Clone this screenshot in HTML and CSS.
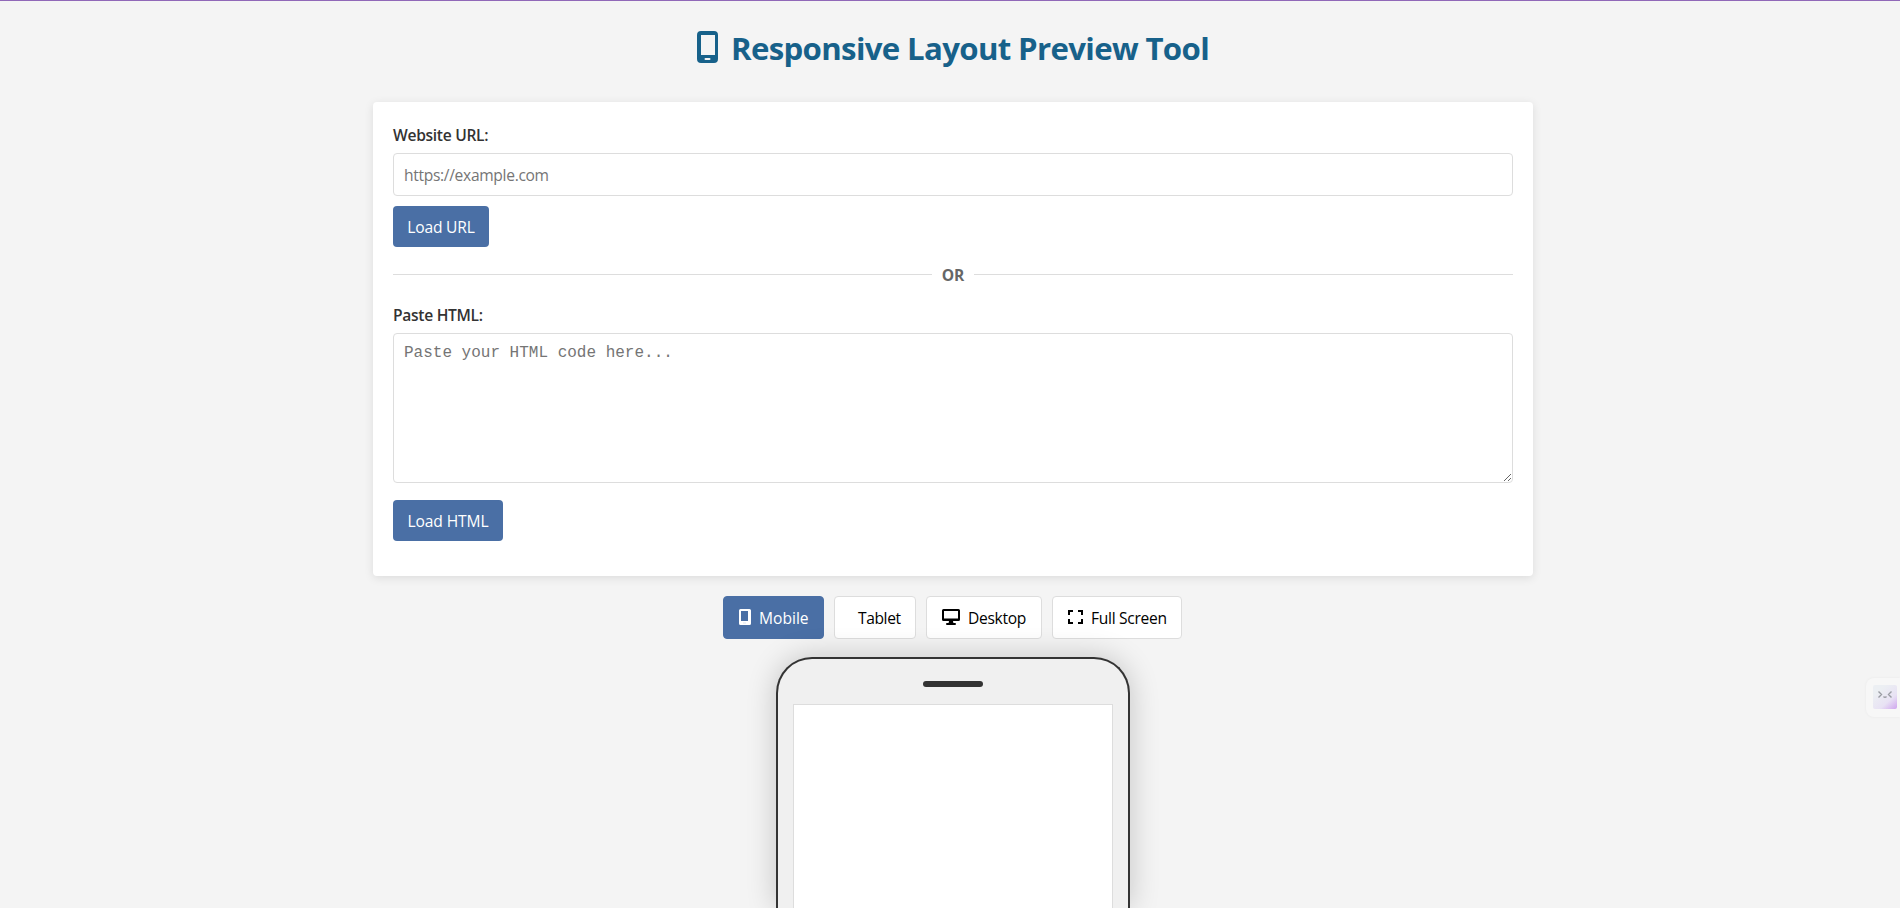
FILE: index.html
```html
<!DOCTYPE html>
<html lang="en">
<head>
<meta charset="utf-8">
<title>Responsive Layout Preview Tool</title>
<link rel="stylesheet" href="styles.css">
</head>
<body>
<div class="container">
  <h1 class="title">
    <svg class="title-icon" width="21" height="32" viewBox="0 0 21 32" fill="currentColor"><path fill-rule="evenodd" d="M4 0h13a4 4 0 0 1 4 4v24a4 4 0 0 1-4 4H4a4 4 0 0 1-4-4V4a4 4 0 0 1 4-4zM4 4v20h14V4zM8.500 27a1 1 0 0 0 0 2h4a1 1 0 0 0 0-2z"/></svg>
    <span>Responsive Layout Preview Tool</span>
  </h1>
  <section class="card">
    <div class="group">
      <label class="label" for="url">Website URL:</label>
      <input class="field" id="url" type="text" placeholder="https://example.com">
      <button class="load load-url">Load URL</button>
    </div>
    <div class="divider"><span class="or">OR</span></div>
    <div class="group">
      <label class="label label-html" for="html">Paste HTML:</label>
      <textarea class="code" id="html" placeholder="Paste your HTML code here..."></textarea>
      <button class="load load-html">Load HTML</button>
    </div>
  </section>
  <nav class="devices">
    <button class="device mobile active"><svg width="12" height="16" viewBox="0 0 12 16" fill="currentColor"><path fill-rule="evenodd" d="M1.500 0h9A1.500 1.500 0 0 1 12 1.500v13a1.500 1.500 0 0 1-1.500 1.500h-9A1.500 1.500 0 0 1 0 14.500v-13A1.500 1.500 0 0 1 1.500 0zM2 2v10h7V2z"/><path class="home" d="M4 13.500h3v1H4z"/></svg><span>Mobile</span></button>
    <button class="device tablet"><span>Tablet</span></button>
    <button class="device desktop"><svg width="18" height="16" viewBox="0 0 18 16" fill="currentColor"><path fill-rule="evenodd" d="M1.500 0h15A1.500 1.500 0 0 1 18 1.500v9a1.500 1.500 0 0 1-1.500 1.500H11l.4 2H13a1 1 0 0 1 0 2H5a1 1 0 0 1 0-2h1.600l.4-2H1.500A1.500 1.500 0 0 1 0 10.500v-9A1.500 1.500 0 0 1 1.500 0zM2 2v7.500h14V2z"/></svg><span>Desktop</span></button>
    <button class="device full"><svg width="15" height="16" viewBox="0 0 15 16" fill="none" stroke="currentColor" stroke-width="2"><path d="M1 6V2h4M10 2h4v4M1 10v4h4M10 14h4v-4"/></svg><span>Full Screen</span></button>
  </nav>
  <div class="phone">
    <div class="speaker"></div>
    <div class="screen"></div>
  </div>
</div>
<div class="helper"><svg width="24" height="24" viewBox="0 0 24 24"><defs><linearGradient id="g" x1="0.3" y1="0.2" x2="1" y2="1"><stop offset="0" stop-color="#eceff3"/><stop offset=".55" stop-color="#e8e2f4"/><stop offset="1" stop-color="#cfa5ee"/></linearGradient></defs><rect width="24" height="24" rx="2" fill="url(#g)"/><path d="M5.500 6.500 8.500 9.500l-3 3M18.500 6.500l-3 3 3 3M10.500 11.500q1.500 1.700 3 0" fill="none" stroke="#9a9ca3" stroke-width="1.400"/></svg></div>
</body>
</html>
```
FILE: styles.css
```css
* { box-sizing: border-box; }
html { overflow: hidden; }
body {
  margin: 0;
  height: 908px;
  overflow: hidden;
  position: relative;
  border-top: 1px solid #9068b8;
  background: #f4f4f4;
  color: #333;
  font: 15.6px/26px "Open Sans", "Noto Sans", sans-serif;
}
.container {
  display: flex;
  flex-direction: column;
  width: 1166px;
  height: 907px;
  margin: 0 auto;
  padding-left: 6px;
  box-sizing: border-box;
  transform: none;
}
.title {
  display: flex;
  flex: none;
  justify-content: center;
  align-items: center;
  gap: 13px;
  height: 101px;
  margin: 0;
  padding-bottom: 7px;
  color: #17618a;
  font-size: 31.2px;
  font-weight: 700;
  letter-spacing: -0.66px;
  white-space: nowrap;
}
.title-icon { margin-top: -3px; }
.card {
  flex: none;
  height: 474px;
  padding: 20px;
  border-radius: 4px;
  background: #fff;
  box-shadow: 0 2px 10px rgba(0, 0, 0, .1);
}
.group { display: flex; flex-direction: column; align-items: flex-start; }
.label { height: 31px; font-weight: 600; letter-spacing: -.3px; }
.field, .code {
  width: 100%;
  padding: 10px;
  border: 1px solid #ddd;
  border-radius: 4px;
  background: #fff;
}
.field { height: 43px; font: 15.6px "Open Sans", sans-serif; letter-spacing: -.32px; }
.code { height: 150px; font: 16px "Liberation Mono", monospace; resize: vertical; }
::placeholder { color: #757575; opacity: 1; }
.load {
  height: 41px;
  padding: 0;
  border: 0;
  border-radius: 4px;
  background: #4a6fa5;
  color: #fff;
  font: 15.6px "Open Sans", sans-serif;
}
.load-url { width: 96px; margin-top: 10px; letter-spacing: -.2px; }
.load-html { width: 110px; margin-top: 17px; letter-spacing: -.1px; }
.divider { display: flex; align-items: center; gap: 10px; height: 25px; margin: 15px 0; }
.divider::before, .divider::after { content: ""; flex: 1; height: 1px; background: #ddd; }
.or { color: #666; font-weight: 700; }
.devices { display: flex; flex: none; justify-content: center; gap: 10px; margin: 20px 0 18px; padding-right: 1px; }
.device {
  display: flex;
  align-items: center;
  gap: 8px;
  height: 43px;
  padding: 0 0 0 15px;
  border: 1px solid #ddd;
  border-radius: 4px;
  background: #fff;
  color: #000;
  font: 15.6px "Open Sans", sans-serif;
  white-space: nowrap;
}
.device svg { margin-top: -2px; }
.mobile { width: 101px; }
.tablet { width: 82px; padding-left: 23px; letter-spacing: -.4px; }
.desktop { width: 116px; letter-spacing: -.3px; }
.full { width: 130px; letter-spacing: -.3px; }
.active { background: #4a6fa5; border-color: #4a6fa5; color: #fff; }
.home { fill: #dde3ed; }
.phone {
  display: flex;
  flex: 1;
  flex-direction: column;
  width: 354px;
  margin: 0 auto;
  padding: 22px 15px 0;
  border: 2px solid #333;
  border-bottom: 0;
  border-radius: 36px 36px 0 0;
  background: #f0f0f0;
  box-shadow: 0 0 30px rgba(0, 0, 0, .2);
}
.speaker { flex: none; width: 60px; height: 6px; margin: 0 auto 17px; border-radius: 3px; background: #333; }
.screen { flex: 1; border: 1px solid #ddd; border-bottom: 0; background: #fff; }
.helper {
  position: absolute;
  right: 0;
  top: 677px;
  width: 34px;
  height: 39px;
  padding: 7px 0 0 7px;
  border-radius: 8px 0 0 8px;
  background: #f7f7f7;
  box-shadow: 0 0 3px rgba(0, 0, 0, .05);
}
```
